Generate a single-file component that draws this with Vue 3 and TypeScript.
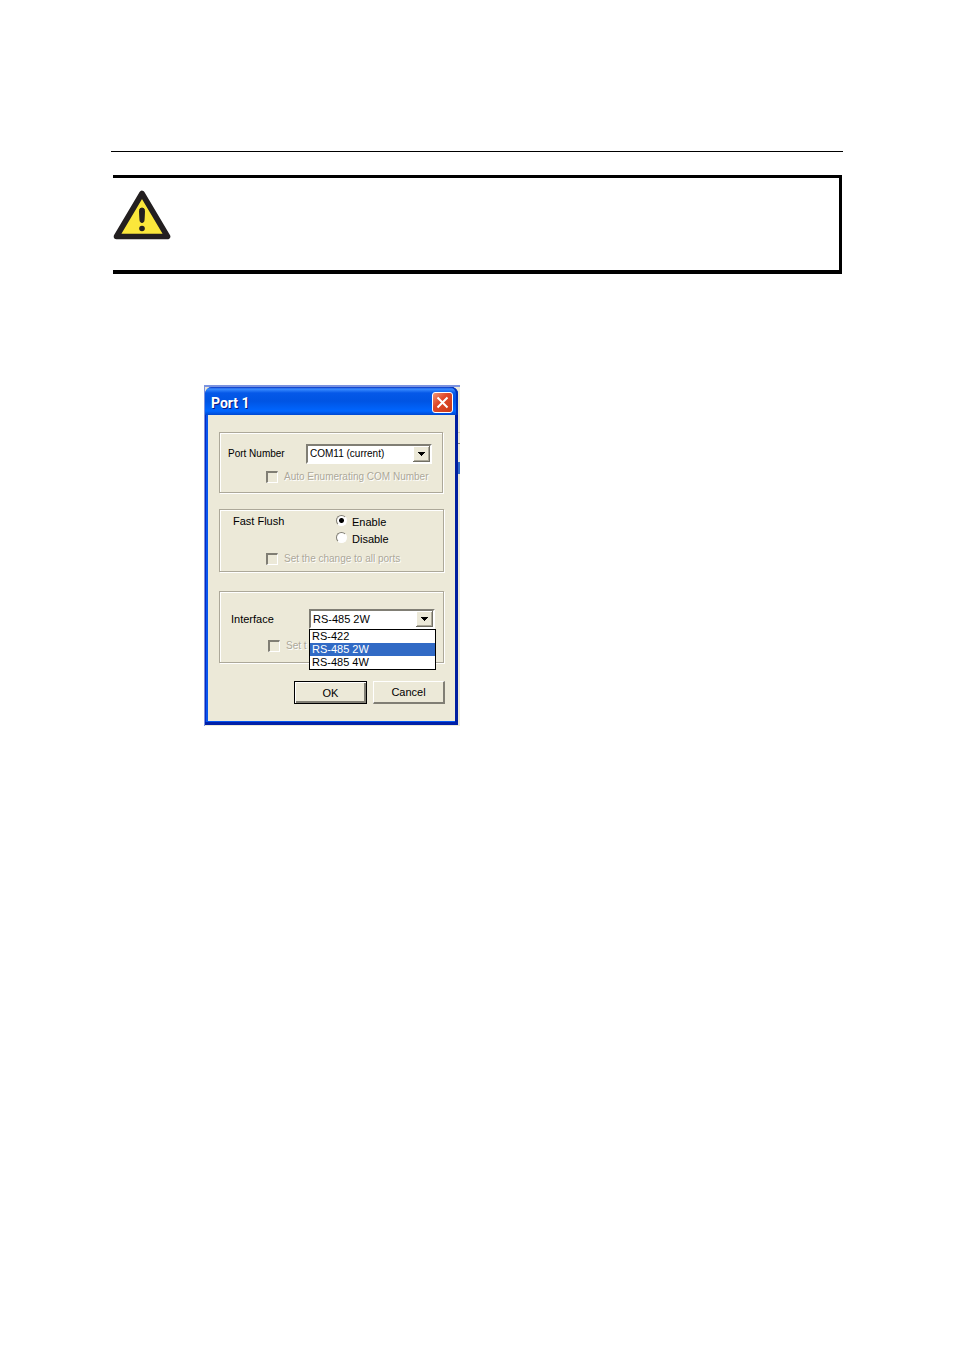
<script setup lang="ts">
import { ref } from 'vue'

const comPort = ref('COM11 (current)')
const autoEnumerate = ref(false)
const fastFlush = ref('Enable')
const flushAll = ref(false)
const interfaceAll = ref(false)
const modes = ['RS-422', 'RS-485 2W', 'RS-485 4W']
const mode = ref('RS-485 2W')
</script>

<template>
  <main class="page">
    <hr class="rule" />
    <section class="notice" aria-label="Attention">
      <svg class="warning" viewBox="0 0 58 50" aria-hidden="true">
        <path d="M29 3.5 L54.5 46.5 H3.5 Z" fill="#fbe73b" stroke="#231f20" stroke-width="5.6" stroke-linejoin="round" />
        <path d="M26.5 20.5 a2.5 2.5 0 0 1 5 0 L31 30.5 a2 2 0 0 1 -4 0 Z" fill="#231f20" stroke="#231f20" />
        <circle cx="29" cy="38.5" r="2.8" fill="#231f20" />
      </svg>
    </section>

    <div class="backdrop">
      <form class="window" role="dialog" aria-labelledby="title" @submit.prevent>
        <header class="titlebar">
          <h1 id="title">Port 1</h1>
          <button type="button" class="close" aria-label="Close">
            <svg viewBox="0 0 19 19" aria-hidden="true">
              <path d="M4.5 4.5 L14.5 14.5 M14.5 4.5 L4.5 14.5" stroke="#fff" stroke-width="2" />
            </svg>
          </button>
        </header>
        <div class="body">
          <div class="group port">
            <div class="row">
              <label for="com">Port Number</label>
              <select id="com" v-model="comPort" class="combo">
                <option>COM11 (current)</option>
              </select>
            </div>
            <label class="check">
              <input v-model="autoEnumerate" type="checkbox" disabled />
              <span>Auto Enumerating COM Number</span>
            </label>
          </div>

          <div class="group flush" role="radiogroup" aria-labelledby="flush">
            <div class="flush-row">
              <span id="flush">Fast Flush</span>
              <div class="radios">
                <label v-for="choice in ['Enable', 'Disable']" :key="choice" class="radio">
                  <input v-model="fastFlush" type="radio" name="flush" :value="choice" />
                  <span>{{ choice }}</span>
                </label>
              </div>
            </div>
            <label class="check">
              <input v-model="flushAll" type="checkbox" disabled />
              <span>Set the change to all ports</span>
            </label>
          </div>

          <div class="group interface">
            <div class="row">
              <label for="mode">Interface</label>
              <div class="dropdown">
                <select id="mode" v-model="mode" class="combo">
                  <option v-for="item in modes" :key="item">{{ item }}</option>
                </select>
                <ul class="list" role="listbox" aria-label="Interface">
                  <li
                    v-for="item in modes"
                    :key="item"
                    role="option"
                    :aria-selected="item === mode"
                    :class="{ selected: item === mode }"
                    @click="mode = item"
                  >{{ item }}</li>
                </ul>
              </div>
            </div>
            <label class="check">
              <input v-model="interfaceAll" type="checkbox" disabled />
              <span>Set t</span>
            </label>
          </div>

          <footer class="actions">
            <button type="submit" class="push default"><span>OK</span></button>
            <button type="button" class="push"><span>Cancel</span></button>
          </footer>
        </div>
      </form>
    </div>
  </main>
</template>

<style>
body {
  margin: 0;
  background: #fff;
}
</style>

<style scoped>
* {
  box-sizing: border-box;
}

.page {
  padding: 151px 111px 40px;
  font-family: "Liberation Sans", Arial, sans-serif;
  font-size: 11px;
  line-height: 14px;
  color: #000;
}

.rule {
  margin: 0;
  border: 0;
  height: 1px;
  background: #000;
}

.notice {
  margin: 23px 1px 0 2px;
  min-height: 99px;
  padding-top: 12px;
  border: solid #000;
  border-width: 3px 3px 4px 0;
}

.warning {
  display: block;
  width: 58px;
  height: 50px;
}

.backdrop {
  width: 256px;
  margin: 111px 0 0 93px;
  padding: 2px 2px 1px 1px;
  background:
    linear-gradient(#7b93e0, #7b93e0) 0 0 / 100% 2px no-repeat,
    linear-gradient(#7b93e0, #7b93e0) 0 0 / 1px 100% no-repeat,
    linear-gradient(#c8c5b4, #c8c5b4) 100% 47px / 2px 1px no-repeat,
    linear-gradient(#807e74, #807e74) 100% 58px / 2px 1px no-repeat,
    linear-gradient(#316ac5, #316ac5) 100% 77px / 2px 12px no-repeat,
    #ece9d8;
}

.window {
  padding: 0 3px 4px;
  border-radius: 7px 7px 0 0;
  background: linear-gradient(90deg, #0a2bc0 0, #0a2bc0 1px, #0855ee 1px, #0855ee 99%, #001ea0 99%);
  box-shadow: inset 0 -3px #0020a8, inset -2px 0 #001ea0;
}

.titlebar {
  display: flex;
  align-items: center;
  justify-content: space-between;
  height: 28px;
  margin: 0 -3px;
  padding: 3px 5px 0 6px;
  border-radius: 7px 7px 0 0;
  background: linear-gradient(#0831c0 0, #3a8cff 2px, #0558e8 6px, #0054e3 14px, #0066ff 24px, #0048d0 28px);
  box-shadow: inset -2px 0 #0030b8;
}

.titlebar h1 {
  margin: 0;
  font: bold 14px/16px Roboto, "Noto Sans", sans-serif;
  color: #fff;
  text-shadow: 1px 1px #0a1883;
}

.close {
  width: 21px;
  height: 21px;
  padding: 0;
  border: 1px solid #fff;
  border-radius: 3px;
  background: linear-gradient(135deg, #f09878, #e0492a 40%, #c83a18);
}

.close svg {
  display: block;
  width: 19px;
  height: 19px;
}

.body {
  padding: 17px 10px 17px 11px;
  background: #ece9d8;
}

.group {
  margin-right: 1px;
  border: 1px solid #aca899;
  box-shadow: 1px 1px #fff, inset 1px 1px #fff;
}

.port {
  height: 61px;
  margin-right: 2px;
  padding: 11px 10px 0 8px;
  font-size: 10px;
}

.flush {
  height: 63px;
  margin-top: 16px;
  padding: 4px 10px 0 13px;
}

.interface {
  height: 72px;
  margin-top: 19px;
  padding: 17px 8px 0 11px;
}

.row {
  display: flex;
  align-items: center;
  justify-content: space-between;
}

.combo {
  display: block;
  appearance: none;
  width: 126px;
  height: 20px;
  margin: 0;
  padding: 0 20px 0 2px;
  border: 2px solid;
  border-color: #807e74 #fff #fff #807e74;
  border-radius: 0;
  color: #000;
  font: inherit;
  background:
    url("data:image/svg+xml,%3Csvg xmlns='http://www.w3.org/2000/svg' width='17' height='16' shape-rendering='crispEdges'%3E%3Cpath fill='%23716f64' d='M0 0h17v16H0z'/%3E%3Cpath fill='%23fff' d='M0 0h16v15H0z'/%3E%3Cpath fill='%23aca899' d='M1 1h15v14H1z'/%3E%3Cpath fill='%23ece9d8' d='M1 1h14v13H1z'/%3E%3Cpath d='M5 6h7v1h-1v1h-1v1H9v1H8V9H7V8H6V7H5z'/%3E%3C/svg%3E") right center no-repeat,
    #fff;
}

.check {
  display: flex;
  align-items: center;
  gap: 6px;
  width: max-content;
  font-size: 10px;
  color: #aca899;
  text-shadow: 1px 1px #fff;
}

.port .check {
  margin: 6px 0 0 38px;
}

.flush .check {
  margin: 6px 0 0 33px;
}

.interface .check {
  margin: 10px 0 0 37px;
}

.check input {
  appearance: none;
  width: 12px;
  height: 12px;
  margin: 0;
  border: solid;
  border-width: 2px 1px 1px 2px;
  border-color: #807e74 #fff #fff #807e74;
  background: #ece9d8;
}

.flush-row {
  display: grid;
  grid-template-columns: 103px auto;
}

.radios {
  display: grid;
  gap: 3px;
  margin-top: 1px;
}

.radio {
  display: flex;
  gap: 5px;
}

.radio input {
  appearance: none;
  width: 11px;
  height: 11px;
  margin: 0;
  border: 1px solid;
  border-color: #807e74 #fff #fff #807e74;
  border-radius: 50%;
  background: #fff;
}

.radio input:checked {
  background: radial-gradient(circle, #000 2px, #fff 3px);
}

.dropdown {
  position: relative;
}

.list {
  position: absolute;
  top: 20px;
  left: 0;
  z-index: 1;
  width: 127px;
  margin: 0;
  padding: 0;
  border: 1px solid #000;
  background: #fff;
  list-style: none;
}

.list li {
  height: 13px;
  padding-left: 2px;
  line-height: 13px;
}

.list .selected {
  background: #316ac5;
  color: #fff;
}

.actions {
  display: flex;
  justify-content: flex-end;
  gap: 6px;
  margin-top: 18px;
}

.push {
  width: 72px;
  height: 23px;
  padding: 0;
  border: solid;
  border-width: 1px 2px 2px 1px;
  border-color: #fff #807e74 #807e74 #fff;
  background: #ece9d8;
  color: #000;
  font: inherit;
}

.push.default {
  width: 73px;
  border: 1px solid #000;
  box-shadow: inset 1px 1px #fff, inset -2px -2px #807e74;
}
</style>
